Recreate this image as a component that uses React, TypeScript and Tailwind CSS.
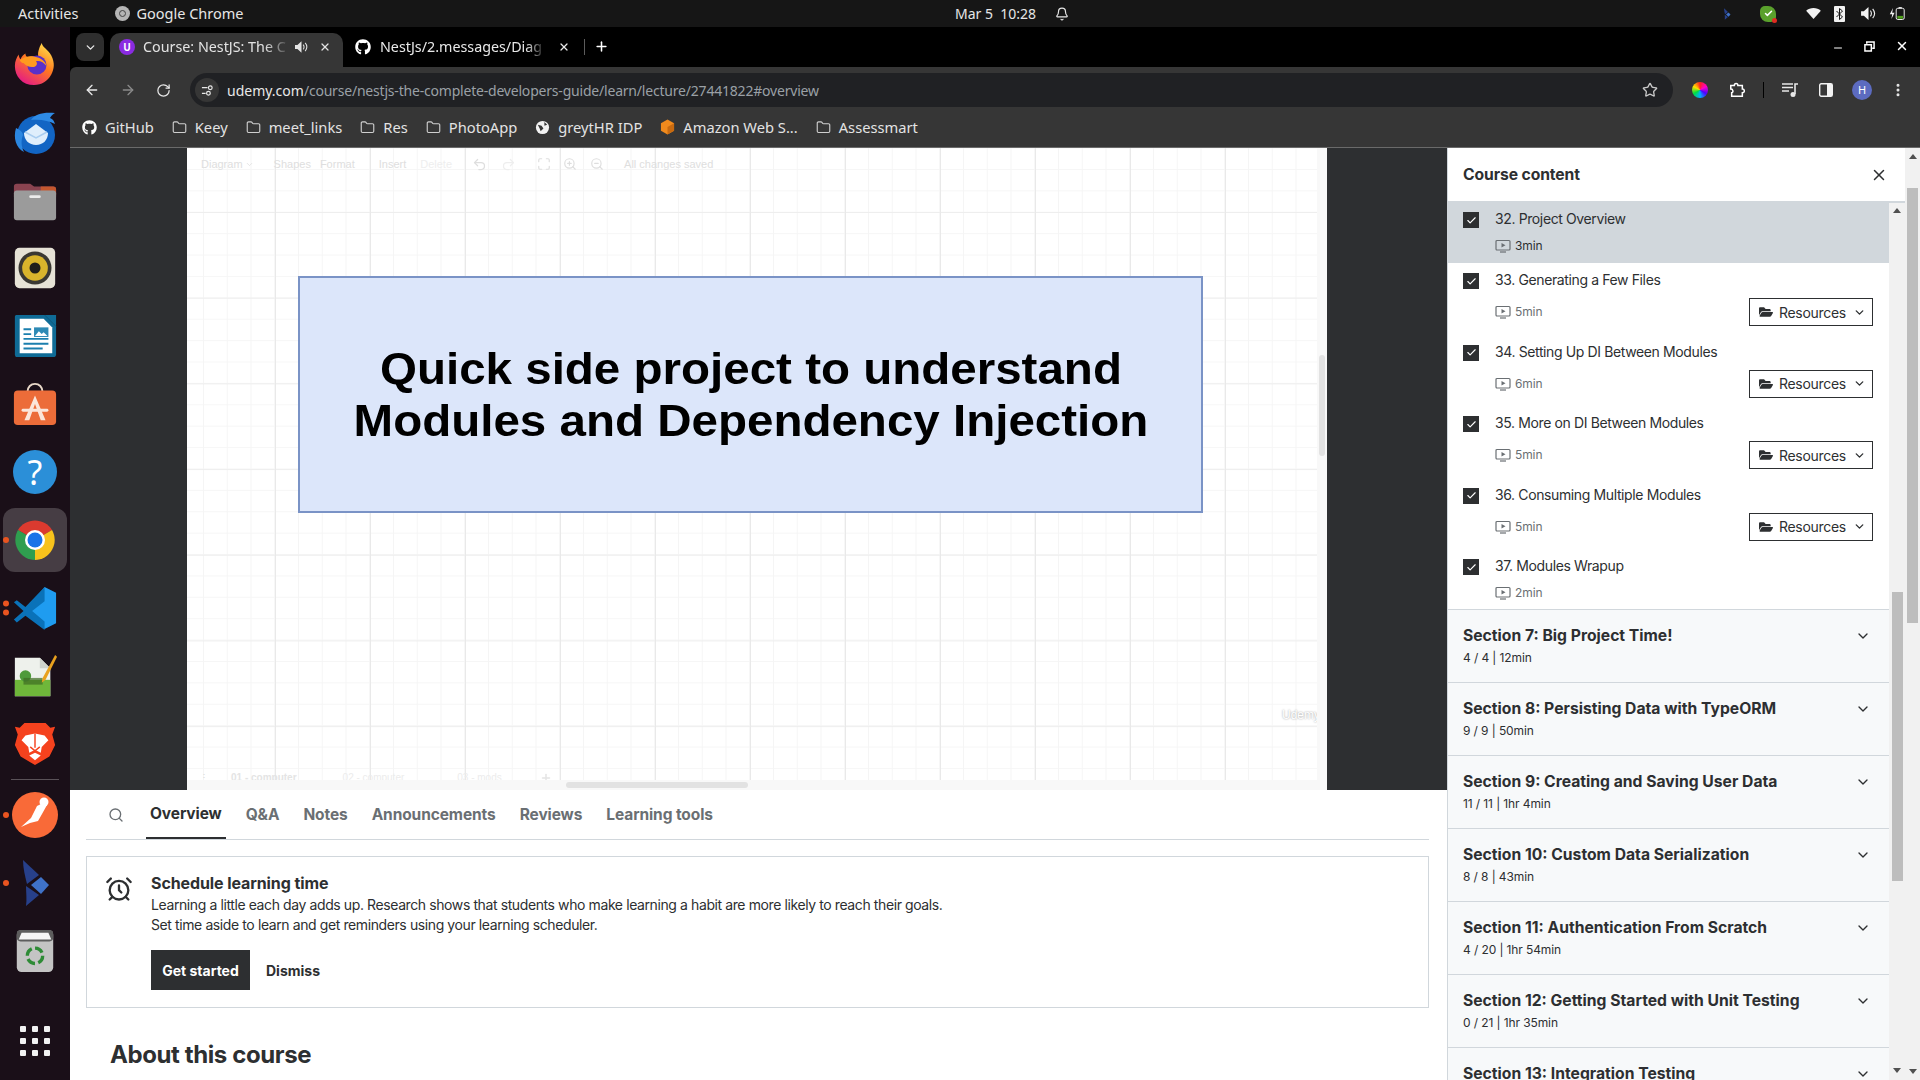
import React from 'react';
import { ArrowLeft, ArrowRight, RotateCw, Star, ChevronDown, X, Search, Plus, Bell, Folder, Check, Undo2, Redo2, ZoomIn, ZoomOut, Maximize, AlarmClock, EllipsisVertical, Minus } from 'lucide-react';
import { FaGithub, FaFolderOpen } from 'react-icons/fa';

const uiFont = "font-['Noto_Sans',sans-serif]";
const pageFont = "font-['Inter',sans-serif]";

/* ---------- dock icons ---------- */
const Firefox = () => (
  <svg viewBox="0 0 48 48" className="w-[46px] h-[46px]">
    <defs>
      <linearGradient id="ff" x1="0.8" y1="0" x2="0.2" y2="1">
        <stop offset="0" stopColor="#ffe14d" />
        <stop offset="0.45" stopColor="#ff7a1f" />
        <stop offset="1" stopColor="#e3148c" />
      </linearGradient>
    </defs>
    <path d="M31 2c1 5 7 7 10 13 4 8 3 14 0 20-4 7-10 11-18 11C11 46 3 37 3 26c0-5 2-9 4-12 0 2 1 4 2 5 1-3 3-5 5-6 0 2 1 3 2 4 4-2 9-1 12 0-2-3 0-10 3-15z" fill="url(#ff)" />
    <circle cx="26" cy="25" r="10" fill="#5a30c8" />
    <path d="M8 20c5-4 12-5 18-3 5 1 9 5 10 9-3-4-7-6-11-5 2 2 1 5-2 6-4 1-8-1-11-4-1 0-3-1-4-3z" fill="#ff9a1f" />
  </svg>
);
const Thunderbird = () => (
  <svg viewBox="0 0 48 48" className="w-[48px] h-[48px]">
    <circle cx="25" cy="27" r="19" fill="#1265c4" />
    <path d="M5 20c-3 10 0 20 8 24-3-6-3-12-1-17 0-3-3-5-7-7z" fill="#2b86e0" />
    <path d="M20 12c4-6 12-8 24-7-3 2-4 3-5 5 3 1 4 3 5 6-6-3-14-5-24-4z" fill="#2e8be6" />
    <path d="M13 25l12-9 12 9c0 7-5 12-12 12s-12-5-12-12z" fill="#dfeefc" />
    <path d="M14 24l11 6 11-6" fill="none" stroke="#a9cdf0" strokeWidth="1.5" />
  </svg>
);
const Files = () => (
  <svg viewBox="0 0 48 48" className="w-[46px] h-[46px]">
    <path d="M2 10c0-2 1-3 3-3h14l4 3h20c2 0 3 1 3 3v8H2z" fill="#8a4350" />
    <path d="M30 10h13c2 0 3 1 3 3v6H30z" fill="#c4572f" />
    <rect x="2" y="14" width="44" height="31" rx="3" fill="#9b9b9b" />
    <rect x="18" y="19" width="12" height="3" rx="1.5" fill="#ececec" />
  </svg>
);
const Rhythmbox = () => (
  <svg viewBox="0 0 48 48" className="w-[44px] h-[44px]">
    <rect x="2" y="2" width="44" height="44" rx="5" fill="#e6e2d6" />
    <circle cx="24" cy="24" r="18" fill="#3a3833" />
    <circle cx="24" cy="24" r="14" fill="#d9b42c" />
    <circle cx="24" cy="24" r="6" fill="#1f1e1b" />
  </svg>
);
const Writer = () => (
  <svg viewBox="0 0 48 48" className="w-[46px] h-[46px]">
    <path d="M4 2h30l12 12v29c0 2-1 3-3 3H5c-1 0-2-1-2-3V4c0-1 1-2 1-2z" fill="#0f6b96" />
    <path d="M8 6h25l9 9v27H8z" fill="#fff" />
    <path d="M34 2l12 0v12z" fill="#0f6b96" />
    <path d="M12 17h8M12 22h8M12 27h26M12 32h26M12 37h20" stroke="#1b7fae" strokeWidth="2" />
    <rect x="23" y="15" width="15" height="10" fill="#2d8ab5" />
    <path d="M24 24l4-5 3 3 2-2 4 4z" fill="#fff" />
  </svg>
);
const AppStore = () => (
  <svg viewBox="0 0 48 48" className="w-[46px] h-[46px]">
    <path d="M16 12c0-12 16-12 16 0" fill="none" stroke="#e8d8c8" strokeWidth="2" />
    <rect x="2" y="10" width="44" height="36" rx="4" fill="#ec6c39" />
    <path d="M24 15l-11 26h5l6-17 6 17h5z" fill="#fbe6da" />
    <rect x="10" y="29" width="28" height="3" rx="1.5" fill="#fbe6da" />
  </svg>
);
const Chrome = () => (
  <svg viewBox="0 0 48 48" className="w-[48px] h-[48px]">
    <path d="M24 24L7 14A20 20 0 0 1 41 14z" fill="#db3a2f" />
    <path d="M24 24L41 14A20 20 0 0 1 24 44z" fill="#f8c21c" />
    <path d="M24 24L24 44A20 20 0 0 1 7 14z" fill="#2f9e4f" />
    <circle cx="24" cy="24" r="10" fill="#fff" />
    <circle cx="24" cy="24" r="7.5" fill="#1a73e8" />
  </svg>
);
const VSCode = () => (
  <svg viewBox="0 0 48 48" className="w-[46px] h-[46px]">
    <path d="M34 2l12 6v32l-12 6-20-19 20-25z" fill="#1f9cf0" />
    <path d="M34 2L14 23 5 16l-3 2 10 9-10 9 3 3 9-7 20 15 0-9-13-11 13-10z" fill="#0a72b9" />
  </svg>
);
const Notepad = () => (
  <svg viewBox="0 0 48 48" className="w-[46px] h-[46px]">
    <path d="M3 5h26l11 11v29H3z" fill="#eef1ec" />
    <path d="M29 5v11h11z" fill="#cfd3cc" />
    <rect x="3" y="28" width="37" height="17" fill="#6fb73a" />
    <circle cx="14" cy="24" r="6" fill="#4e9a3a" />
    <rect x="12" y="26" width="20" height="7" fill="#3d6b22" fillOpacity="0.7" />
    <path d="M45 2l2 2-12 24-4 3 1-5z" fill="#e9a11e" />
  </svg>
);
const Brave = () => (
  <svg viewBox="0 0 48 48" className="w-[46px] h-[46px]">
    <path d="M13 2h22l5 5 5-1-3 8 3 11-6 12-15 9-15-9-6-12 3-11-3-8 5 1z" fill="#f5421e" />
    <path d="M14 15l10-2 10 2 4 5-7 7-1 6-6-3-6 3-1-6-7-7z" fill="#fff" />
    <path d="M24 13v15M19 27l5 4 5-4" fill="none" stroke="#f5421e" strokeWidth="1.500" />
    <path d="M18 36l6-3 6 3-6 5z" fill="#fff" />
  </svg>
);
const Postman = () => (
  <svg viewBox="0 0 48 48" className="w-[48px] h-[48px]">
    <circle cx="24" cy="24" r="23" fill="#f96a38" />
    <path d="M10 36l10-9 6-12 8-4 2 3-5 9-4 7-8 2z" fill="#fff" />
    <circle cx="33" cy="11" r="4.5" fill="#fff" />
  </svg>
);
const Kite = ({ size = 'w-[32px] h-[48px]' }: { size?: string }) => (
  <svg viewBox="0 0 32 48" className={size}>
    <path d="M4 1l16 15-12 9c-2-8-4-16-4-24z" fill="#27408b" />
    <path d="M22 18l8 8-8 9-10-9z" fill="#3f72c8" />
    <path d="M7 27l13 9L7 47c1-6 0-14 0-20z" fill="#27408b" />
  </svg>
);
const Trash = () => (
  <svg viewBox="0 0 48 48" className="w-[46px] h-[46px]">
    <rect x="5" y="2" width="38" height="44" rx="5" fill="#c4c4c4" />
    <rect x="5" y="2" width="38" height="12" rx="4" fill="#5d5d5d" />
    <path d="M10 5h28l3 7H7z" fill="#f5f5f5" />
    <circle cx="24" cy="29" r="8" fill="none" stroke="#2e8b36" strokeWidth="3.500" strokeDasharray="9 3.500" />
  </svg>
);

const DockDot = ({ two }: { two?: boolean }) => (
  <div className="absolute left-[3px] top-1/2 -translate-y-1/2 flex flex-col gap-[3px]">
    <div className="w-[6px] h-[6px] rounded-full bg-[#e95420]" />
    {two && <div className="w-[6px] h-[6px] rounded-full bg-[#e95420]" />}
  </div>
);

const DockItem = ({ children, dot, two }: { children: React.ReactNode; dot?: boolean; two?: boolean }) => (
  <div className="relative h-[68px] flex items-center justify-center">
    {children}
    {dot && <DockDot two={two} />}
  </div>
);

const Dock = () => (
  <div className="w-[70px] shrink-0 flex flex-col bg-[#1a0f18] pt-[3px]">
    <DockItem><Firefox /></DockItem>
    <DockItem><Thunderbird /></DockItem>
    <DockItem><Files /></DockItem>
    <DockItem><Rhythmbox /></DockItem>
    <DockItem><Writer /></DockItem>
    <DockItem><AppStore /></DockItem>
    <DockItem>
      <div className={`w-[44px] h-[44px] rounded-full bg-[#2b8fd8] flex items-center justify-center text-white text-[34px] leading-none ${uiFont}`}>?</div>
    </DockItem>
    <DockItem dot>
      <div className="w-[64px] h-[64px] rounded-[12px] bg-[#463d44] flex items-center justify-center"><Chrome /></div>
    </DockItem>
    <DockItem dot two><VSCode /></DockItem>
    <DockItem><Notepad /></DockItem>
    <DockItem><Brave /></DockItem>
    <div className="h-px mx-[11px] my-px bg-[#5a5258]" />
    <DockItem dot><Postman /></DockItem>
    <DockItem dot><Kite /></DockItem>
    <DockItem><Trash /></DockItem>
    <div className="mt-[41px] grid grid-cols-3 gap-x-[6px] gap-y-[6px] w-[30px] mx-auto">
      {[0, 1, 2, 3, 4, 5, 6, 7, 8].map(i => (
        <div key={i} className="w-[6px] h-[6px] rounded-[1px] bg-[#f2f2f2]" />
      ))}
    </div>
  </div>
);

/* ---------- top bar ---------- */
const TopBar = () => (
  <div className={`relative h-[27px] shrink-0 bg-[#161616] text-[#e6e6e6] text-[14.500px] flex items-center ${uiFont}`}>
    <span className="ml-[18px]">Activities</span>
    <div className="ml-[37px] w-[15px] h-[15px] rounded-full bg-[#b5b5b5] flex items-center justify-center">
      <div className="w-[7px] h-[7px] rounded-full border border-[#444]" />
    </div>
    <span className="ml-[6px]">Google Chrome</span>
    <div className="absolute left-[955px] top-0 h-full flex items-center gap-[19px] text-[14px]">
      <span>Mar 5&nbsp; 10:28</span>
      <Bell size={14} strokeWidth={2} />
    </div>
    <div className="ml-auto flex items-center mr-[15px]">
      <Kite size="w-[8px] h-[14px]" />
      <div className="relative ml-[29px] w-[16px] h-[16px] rounded-[5px_8px_5px_8px] bg-[#5aa02c] flex items-center justify-center">
        <Check size={9} strokeWidth={4} className="text-white" />
        <div className="absolute -right-[1px] -bottom-[1px] w-[5px] h-[5px] rounded-full bg-[#e02b20]" />
      </div>
      <svg viewBox="0 0 16 12" className="ml-[30px] w-[15px] h-[11px]"><path d="M0 3c4-4 12-4 16 0L8 12z" fill="#f2f2f2" /></svg>
      <svg viewBox="0 0 11 16" className="ml-[13px] w-[11px] h-[16px]">
        <rect width="11" height="16" rx="1" fill="#f2f2f2" />
        <path d="M2.500 5l6 6-3 2.500v-11l3 2.500-6 6" fill="none" stroke="#161616" strokeWidth="1" />
      </svg>
      <svg viewBox="0 0 16 14" className="ml-[16px] w-[15px] h-[13px]">
        <path d="M0 4.500h3L8 0v14L3 9.500H0z" fill="#f2f2f2" />
        <path d="M10 4c1.500 1.500 1.500 4.500 0 6M12.500 2c2.500 3 2.500 7 0 10" fill="none" stroke="#f2f2f2" strokeWidth="1.200" />
      </svg>
      <svg viewBox="0 0 20 16" className="ml-[13px] w-[16px] h-[15px]">
        <path d="M5 1L1 9h3l-1 6 4-8H4z" fill="#f2f2f2" />
        <rect x="9" y="1.500" width="10" height="14" rx="2" fill="none" stroke="#f2f2f2" strokeWidth="1.200" />
        <rect x="12" y="0" width="4" height="1.500" fill="#f2f2f2" />
        <rect x="10.500" y="11" width="7" height="3.500" fill="#4ea01a" />
      </svg>
    </div>
  </div>
);

/* ---------- chrome window ---------- */
const TabStrip = () => (
  <div className={`h-[40px] shrink-0 bg-black flex items-end text-[14.300px] ${uiFont}`}>
    <div className="ml-[6px] mb-[6px] w-[28px] h-[28px] rounded-[8px] bg-[#2e2e2e] flex items-center justify-center">
      <ChevronDown size={13} strokeWidth={2.500} className="text-[#e8e8e8]" />
    </div>
    <div className="ml-[6px] w-[233px] h-[34px] pb-[6px] rounded-t-[10px] bg-[#363636] flex items-center text-[#e3e3e3]">
      <div className="ml-[9px] w-[16px] h-[16px] rounded-full bg-[#8a2be2] flex items-center justify-center text-white text-[10px] font-bold">U</div>
      <span className="ml-[8px] w-[148px] whitespace-nowrap overflow-hidden [mask-image:linear-gradient(to_right,black_82%,transparent)]">Course: NestJS: The C</span>
      <svg viewBox="0 0 16 14" className="ml-[4px] w-[13px] h-[12px]">
        <path d="M0 4.500h3L8 0v14L3 9.500H0z" fill="#e3e3e3" />
        <path d="M10 4c1.500 1.500 1.500 4.500 0 6M12.500 2c2.500 3 2.500 7 0 10" fill="none" stroke="#e3e3e3" strokeWidth="1.300" />
      </svg>
      <X size={12} strokeWidth={2.500} className="ml-[11px]" />
    </div>
    <div className="ml-[12px] h-[34px] pb-[6px] flex items-center text-[#e8e8e8]">
      <FaGithub size={16} className="text-white" />
      <span className="ml-[9px] w-[166px] whitespace-nowrap overflow-hidden [mask-image:linear-gradient(to_right,black_88%,transparent)]">NestJs/2.messages/Diag</span>
      <X size={12} strokeWidth={2.500} className="ml-[12px]" />
    </div>
    <div className="ml-[14px] mb-[12px] w-px h-[16px] bg-[#5c5c5c]" />
    <Plus size={15} strokeWidth={2.500} className="ml-[9px] mb-[13px] text-white" />
    <div className="ml-auto mr-[11px] mb-[13px] flex items-center gap-[20px] text-white">
      <Minus size={12} strokeWidth={2} className="mt-[4px]" />
      <svg viewBox="0 0 12 12" className="w-[11px] h-[11px]">
        <path d="M3 3V1h8v7H9M1 4h7v7H1z" fill="none" stroke="#fff" strokeWidth="1.600" />
      </svg>
      <X size={14} strokeWidth={2.500} />
    </div>
  </div>
);

const ToolBar = () => (
  <div className="h-[41px] shrink-0 bg-[#363636] rounded-tl-[6px] pt-[5px] flex items-center pr-[11px]">
    <ArrowLeft size={16} strokeWidth={2} className="ml-[14px] text-[#e8e8e8]" />
    <ArrowRight size={16} strokeWidth={2} className="ml-[20px] text-[#8a8a8a]" />
    <RotateCw size={15} strokeWidth={2} className="ml-[20px] text-[#e8e8e8]" />
    <div className={`ml-[19px] w-[1483px] h-[34px] rounded-full bg-[#202124] flex items-center text-[14px] ${uiFont}`}>
      <div className="ml-[5px] w-[24px] h-[24px] rounded-full bg-[#363636] flex items-center justify-center">
        <svg viewBox="0 0 14 14" className="w-[13px] h-[13px]">
          <path d="M1 4h6M1 10h4" stroke="#e8e8e8" strokeWidth="1.300" />
          <circle cx="10" cy="4" r="2" fill="none" stroke="#e8e8e8" strokeWidth="1.300" />
          <circle cx="8" cy="10" r="2" fill="none" stroke="#e8e8e8" strokeWidth="1.300" />
        </svg>
      </div>
      <span className="ml-[8px] text-[#e8e8e8]">udemy.com</span>
      <span className="text-[#9aa0a6] tracking-[-0.2px]">/course/nestjs-the-complete-developers-guide/learn/lecture/27441822#overview</span>
      <Star size={16} strokeWidth={2} className="ml-auto mr-[15px] text-[#c8c8c8]" />
    </div>
    <div className="ml-[19px] w-[16px] h-[16px] rounded-full bg-[conic-gradient(#ff2020,#ff00c8,#5000ff,#00b0ff,#00e040,#ffe000,#ff2020)]" />
    <svg viewBox="0 0 18 18" className="ml-[21px] w-[16px] h-[16px]">
      <path d="M2 4h4c0-3 4-3 4 0h5v4c3 0 3 4 0 4v4H3v-4c2 0 2-4-1-4z" fill="none" stroke="#fff" strokeWidth="1.700" />
    </svg>
    <div className="ml-[18px] w-px h-[16px] bg-black" />
    <svg viewBox="0 0 16 14" className="ml-[18px] w-[16px] h-[14px]">
      <path d="M0 1h11M0 4.500h11M0 8h7" stroke="#e8e8e8" strokeWidth="1.500" />
      <circle cx="11" cy="11.500" r="2.500" fill="#e8e8e8" />
      <path d="M13 11V1h3" fill="none" stroke="#e8e8e8" strokeWidth="1.600" />
    </svg>
    <svg viewBox="0 0 14 14" className="ml-[21px] w-[14px] h-[14px]">
      <rect x="0.700" y="0.700" width="12.600" height="12.600" rx="1.500" fill="none" stroke="#f2f2f2" strokeWidth="1.400" />
      <rect x="8" y="1" width="5" height="12" fill="#f2f2f2" />
    </svg>
    <div className="ml-[19px] w-[20px] h-[20px] rounded-full bg-[#5c6bc0] flex items-center justify-center text-white text-[11px] font-['Noto_Sans',sans-serif]">H</div>
    <EllipsisVertical size={16} strokeWidth={2.500} className="ml-[18px] text-[#e8e8e8]" />
  </div>
);

const Mark = ({ label, icon, ml = 'ml-[18px]' }: { label: string; icon?: React.ReactNode; ml?: string }) => (
  <div className={`flex items-center gap-[8px] ${ml}`}>
    {icon ?? <Folder size={15} strokeWidth={1.800} className="text-[#cfcfcf]" />}
    <span>{label}</span>
  </div>
);

const BookmarkBar = () => (
  <div className={`h-[40px] shrink-0 bg-[#363636] flex items-center text-[14.700px] text-[#e3e3e3] border-b border-[#6a6a6a] ${uiFont}`}>
    <Mark ml="ml-[12px]" label="GitHub" icon={<FaGithub size={15} className="text-white" />} />
    <Mark label="Keey" />
    <Mark label="meet_links" />
    <Mark label="Res" />
    <Mark label="PhotoApp" />
    <Mark label="greytHR IDP" icon={
      <svg viewBox="0 0 16 16" className="w-[15px] h-[15px]">
        <circle cx="8" cy="8" r="7" fill="#f2f2f2" />
        <path d="M3 5l4 1 2 3-3 3-1-3zM10 2l3 3-3 1z" fill="#363636" />
      </svg>
    } />
    <Mark label="Amazon Web S..." icon={
      <svg viewBox="0 0 16 16" className="w-[15px] h-[16px]">
        <path d="M8 0l7 4v8l-7 4-7-4V4z" fill="#f08a1d" />
        <path d="M8 8l7-4v8l-7 4z" fill="#c86a10" />
      </svg>
    } />
    <Mark label="Assessmart" />
  </div>
);

/* ---------- lecture slide ---------- */
const Slide = () => (
  <div className="relative w-[1140px] h-full overflow-hidden bg-white font-['Liberation_Sans',sans-serif] bg-[linear-gradient(to_right,#e9e9e9_1px,transparent_1px),linear-gradient(to_bottom,#eeeeee_1px,transparent_1px),linear-gradient(to_right,#f5f5f5_1px,transparent_1px),linear-gradient(to_bottom,#f6f6f6_1px,transparent_1px)] [background-size:95px_85.7px,95px_85.7px,23.75px_21.4px,23.75px_21.4px] [background-position:88px_64px,88px_64px,16px_21px,16px_21px]">
    <div className="flex items-center h-[32px] pl-[14px] text-[11px] text-[#dedede]">
      <span>Diagram</span>
      <ChevronDown size={9} className="ml-[2px]" />
      <span className="ml-[20px]">Shapes</span>
      <span className="ml-[9px]">Format</span>
      <span className="ml-[24px]">Insert</span>
      <span className="ml-[14px] text-[#eeeeee]">Delete</span>
      <Undo2 size={15} className="ml-[20px]" />
      <Redo2 size={15} className="ml-[14px] text-[#eeeeee]" />
      <Maximize size={14} className="ml-[21px]" />
      <ZoomIn size={14} className="ml-[12px]" />
      <ZoomOut size={14} className="ml-[13px]" />
      <span className="ml-[20px]">All changes saved</span>
    </div>
    <div className="ml-[111px] mt-[96px] w-[905px] h-[237px] border-[2px] border-[#7a93c6] bg-[#dce6fa] flex items-center justify-center text-center text-black font-bold text-[44px] leading-[51.500px]">
      <span className="inline-block whitespace-nowrap scale-x-[1.08]">Quick side project to understand<br />Modules and Dependency Injection</span>
    </div>
    <span className="absolute right-[7px] bottom-[66px] text-[12px] text-white [text-shadow:0_0_2px_#8f8f8f]">Udemy</span>
    <div className="absolute left-[12px] bottom-[5px] flex items-center text-[10px] text-[#e4e4e4]">
      <span className="text-[#dcdcdc]">⋮</span>
      <span className="ml-[22px] font-bold">01 - computer</span>
      <span className="ml-[46px] text-[#ececec]">02 - computer</span>
      <span className="ml-[53px] text-[#ececec]">03 - mods</span>
      <Plus size={12} strokeWidth={3} className="ml-[38px]" />
    </div>
    <div className="absolute left-0 right-0 bottom-0 h-[10px] bg-[#f8f8f8]">
      <div className="ml-[379px] mt-[2px] w-[182px] h-[6px] rounded-full bg-[#e2e2e2]" />
    </div>
    <div className="absolute right-0 top-0 bottom-0 w-[10px] bg-[#f8f8f8]">
      <div className="ml-[2px] mt-[207px] w-[6px] h-[101px] rounded-full bg-[#e2e2e2]" />
    </div>
  </div>
);

const TABS = ['Overview', 'Q&A', 'Notes', 'Announcements', 'Reviews', 'Learning tools'];

const LeftColumn = () => (
  <div className={`w-[1377px] shrink-0 flex flex-col bg-white text-[#2d2f31] ${pageFont}`}>
    <div className="h-[642px] shrink-0 bg-[#2d2f31] pl-[117px]">
      <Slide />
    </div>
    <div className="ml-[16px] mr-[18px] h-[50px] shrink-0 border-b border-[#d1d7dc] flex items-center">
      <Search size={16} strokeWidth={2} className="ml-[22px] text-[#6a6f73]" />
      <div className="ml-[22px] flex h-full gap-[16px]">
        {TABS.map((tab, i) => (
          <div key={tab} className={`h-full px-[4px] flex items-center text-[15.500px] font-bold tracking-[-0.1px] ${i === 0 ? 'text-[#2d2f31] border-b-[2px] border-[#2d2f31]' : 'text-[#6a6f73]'}`}>
            {tab}
          </div>
        ))}
      </div>
    </div>
    <div className="ml-[16px] mr-[18px] mt-[16px] h-[152px] shrink-0 border border-[#d1d7dc] flex">
      <AlarmClock size={28} strokeWidth={2} className="ml-[18px] mt-[18px]" />
      <div className="ml-[18px] pt-[16px]">
        <div className="text-[16px] leading-[20px] font-bold tracking-[-0.1px]">Schedule learning time</div>
        <div className="mt-[2px] text-[14px] leading-[20px] tracking-[-0.4px]">
          Learning a little each day adds up. Research shows that students who make learning a habit are more likely to reach their goals.<br />
          Set time aside to learn and get reminders using your learning scheduler.
        </div>
        <div className="mt-[15px] flex items-center">
          <div className="w-[99px] h-[40px] bg-[#2d2f31] text-white text-[14px] font-bold flex items-center justify-center">Get started</div>
          <div className="ml-[16px] text-[14px] font-bold">Dismiss</div>
        </div>
      </div>
    </div>
    <div className="ml-[40px] mt-[33px] text-[24px] leading-[28px] font-bold tracking-[-0.4px]">About this course</div>
  </div>
);

/* ---------- course content panel ---------- */
const VideoGlyph = () => (
  <svg viewBox="0 0 16 16" className="w-[16px] h-[16px] text-[#6a6f73]">
    <rect x="1" y="2.500" width="14" height="9.500" rx="1" fill="none" stroke="currentColor" strokeWidth="1.200" />
    <path d="M6.500 5v4.500L10.500 7.250z" fill="currentColor" />
    <path d="M5 14h6" stroke="currentColor" strokeWidth="1.200" />
  </svg>
);

const LESSONS = [
  { title: '32. Project Overview', min: '3min', active: true },
  { title: '33. Generating a Few Files', min: '5min', res: true },
  { title: '34. Setting Up DI Between Modules', min: '6min', res: true },
  { title: '35. More on DI Between Modules', min: '5min', res: true },
  { title: '36. Consuming Multiple Modules', min: '5min', res: true },
  { title: '37. Modules Wrapup', min: '2min' },
];

const SECTIONS = [
  { title: 'Section 7: Big Project Time!', sub: '4 / 4 | 12min' },
  { title: 'Section 8: Persisting Data with TypeORM', sub: '9 / 9 | 50min' },
  { title: 'Section 9: Creating and Saving User Data', sub: '11 / 11 | 1hr 4min' },
  { title: 'Section 10: Custom Data Serialization', sub: '8 / 8 | 43min' },
  { title: 'Section 11: Authentication From Scratch', sub: '4 / 20 | 1hr 54min' },
  { title: 'Section 12: Getting Started with Unit Testing', sub: '0 / 21 | 1hr 35min' },
  { title: 'Section 13: Integration Testing', sub: '' },
];

const Lesson = ({ title, min, res, active }: { title: string; min: string; res?: boolean; active?: boolean }) => (
  <div className={`flex pl-[15px] pr-[16px] ${active ? 'bg-[#d1d7dc] h-[60px]' : res ? 'h-[71.500px]' : 'h-[60px]'}`}>
    <div className={`w-[16px] h-[16px] shrink-0 bg-[#2d2f31] flex items-center justify-center ${active ? 'mt-[9px]' : 'mt-[10px]'}`}>
      <Check size={11} strokeWidth={2.500} className="text-white" />
    </div>
    <div className={`ml-[16px] flex-1 ${active ? 'pt-[6px]' : 'pt-[7px]'}`}>
      <div className="text-[14px] leading-[20px] text-[#2d2f31] tracking-[-0.38px]">{title}</div>
      <div className={`flex items-center justify-between ${res ? 'mt-[8px] h-[28px]' : 'mt-[9px] h-[16px]'}`}>
        <div className={`flex items-center gap-[4px] text-[12px] tracking-[-0.1px] ${active ? 'text-[#2d2f31]' : 'text-[#6a6f73]'}`}>
          <VideoGlyph />
          <span>{min}</span>
        </div>
        {res && (
          <div className="w-[124px] h-[28px] border border-[#2d2f31] bg-white flex items-center pl-[9px] text-[14px] text-[#2d2f31] tracking-[-0.3px]">
            <FaFolderOpen size={14} />
            <span className="ml-[6px]">Resources</span>
            <ChevronDown size={13} strokeWidth={2.500} className="ml-[7px]" />
          </div>
        )}
      </div>
    </div>
  </div>
);

const Section = ({ title, sub }: { title: string; sub: string }) => (
  <div className="h-[73px] shrink-0 bg-[#f7f9fa] border-b border-[#d1d7dc] pl-[15px] pr-[16px] pt-[16px] flex justify-between">
    <div>
      <div className="text-[15.700px] leading-[20px] font-bold text-[#2d2f31] whitespace-nowrap">{title}</div>
      <div className="mt-[4px] text-[12px] leading-[16px] text-[#2d2f31] tracking-[-0.1px]">{sub}</div>
    </div>
    <ChevronDown size={16} strokeWidth={2} className="mr-[2px] mt-[2px] text-[#2d2f31]" />
  </div>
);

const Arrow = ({ up }: { up?: boolean }) => (
  <svg viewBox="0 0 8 5" className="w-[8px] h-[5px]">
    <path d={up ? 'M0 5l4-5 4 5z' : 'M0 0l4 5 4-5z'} fill="#505050" />
  </svg>
);

const Panel = () => (
  <div className={`flex-1 min-w-0 flex flex-col bg-white border-l border-[#d1d7dc] ${pageFont}`}>
    <div className="h-[55px] shrink-0 border-b-[2px] border-[#d1d7dc] flex items-center justify-between pl-[15px] pr-[17px]">
      <span className="text-[15.700px] font-bold text-[#2d2f31] tracking-[-0.1px]">Course content</span>
      <X size={18} strokeWidth={2} className="text-[#2d2f31]" />
    </div>
    <div className="flex-1 min-h-0 flex">
      <div className="w-[441px] shrink-0 overflow-hidden">
        <div className="border-b border-[#d1d7dc]">
          {LESSONS.map(l => <Lesson key={l.title} {...l} />)}
        </div>
        {SECTIONS.map(s => <Section key={s.title} {...s} />)}
      </div>
      <div className="flex-1 bg-[#f1f1f1] flex flex-col items-center">
        <div className="mt-[5px]"><Arrow up /></div>
        <div className="mt-[379px] w-[11px] h-[289px] bg-[#bdbdbd]" />
        <div className="mt-auto mb-[7px]"><Arrow /></div>
      </div>
    </div>
  </div>
);

const PageScrollbar = () => (
  <div className="w-[15px] shrink-0 bg-[#f1f1f1] flex flex-col items-center">
    <div className="mt-[6px]"><Arrow up /></div>
    <div className="mt-[29px] w-[11px] h-[435px] bg-[#bdbdbd]" />
    <div className="mt-auto mb-[6px]"><Arrow /></div>
  </div>
);

const App: React.FC = () => {
  return (
    <div className="w-[1920px] h-[1080px] overflow-hidden flex flex-col bg-black">
      <TopBar />
      <div className="flex-1 min-h-0 flex">
        <Dock />
        <div className="flex-1 min-w-0 flex flex-col bg-black">
          <TabStrip />
          <ToolBar />
          <BookmarkBar />
          <div className="flex-1 min-h-0 flex overflow-hidden">
            <LeftColumn />
            <Panel />
            <PageScrollbar />
          </div>
        </div>
      </div>
    </div>
  );
};

export default App;
